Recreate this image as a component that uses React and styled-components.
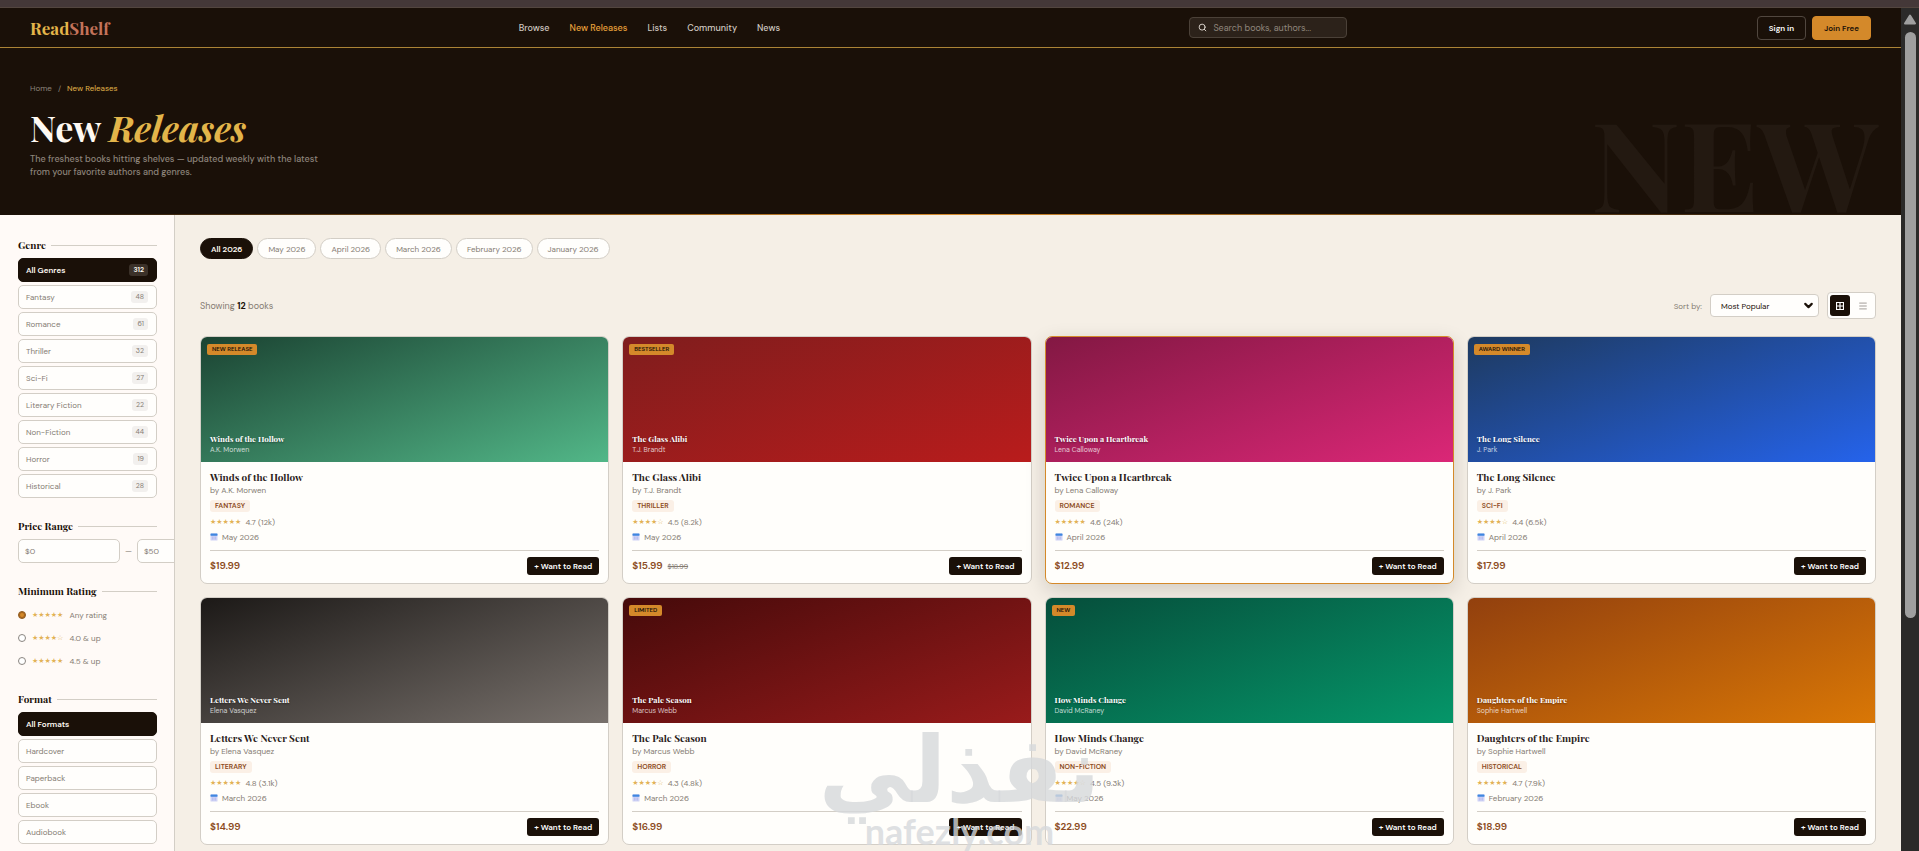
import React, { useState } from "react";
import styled, { createGlobalStyle } from "styled-components";
import { ChevronDown, Menu, Search } from "lucide-react";

const ink = "#1a1008";
const gold = "#e3b54a";
const amber = "#d4892a";
const border = "#d3cec6";
const muted = "#857c73";
const serif = `"Playfair Display", "Liberation Serif", serif`;
const sans = `"DM Sans", Inter, sans-serif`;

const GlobalStyle = createGlobalStyle`
  *, *::before, *::after { box-sizing: border-box; }
  body { margin: 0; background: #f5efe6; font-family: ${sans}; color: ${ink}; }
  button, input, select { font-family: inherit; margin: 0; }
  h1, h2, h3, p, ul { margin: 0; padding: 0; }
  ul { list-style: none; }
  a { color: inherit; text-decoration: none; }
`;

const Frame = styled.div`
  position: relative;
  display: flex;
  flex-direction: column;
  height: 100vh;
  overflow: hidden;
`;

const TopStrip = styled.div`
  flex: none;
  height: 8px;
  background: #443838;
  border-bottom: 1px solid #53463f;
`;

const Viewport = styled.div`
  flex: 1;
  display: flex;
  min-height: 0;
`;

const Page = styled.div`
  flex: 1;
  min-width: 0;
  overflow: hidden;
`;

const ScrollTrack = styled.div`
  flex: none;
  display: flex;
  flex-direction: column;
  align-items: center;
  gap: 7px;
  width: 18px;
  padding-top: 6px;
  background: #2b2a29;
`;

const ScrollThumb = styled.div`
  width: 11px;
  height: 70%;
  border-radius: 6px;
  background: #9f9f9f;
`;

/* navbar */

const Navbar = styled.header`
  display: flex;
  align-items: center;
  justify-content: space-between;
  height: 40px;
  padding: 0 30px;
  background: ${ink};
  border-bottom: 1px solid #ab8436;
`;

const Logo = styled.a`
  font: 700 17px/20px ${serif};
  color: ${gold};
  span { color: #c4735a; }
`;

const NavLinks = styled.nav`
  display: flex;
  gap: 20px;
`;

const NavLink = styled.a`
  font-size: 9px;
  font-weight: 500;
  line-height: 12px;
  color: ${({ $active }) => ($active ? "#e9a13b" : "#cfc8c0")};
`;

const SearchBox = styled.label`
  display: flex;
  align-items: center;
  gap: 6px;
  width: 158px;
  height: 21px;
  padding: 0 8px;
  border: 1px solid #4b4138;
  border-radius: 4px;
  background: #2c221a;
  color: #e6e0d8;
  input {
    flex: 1;
    min-width: 0;
    padding: 0;
    border: 0;
    outline: 0;
    background: none;
    color: #fff;
    font-size: 9px;
  }
  input::placeholder { color: #8f867c; opacity: 1; }
`;

const NavActions = styled.div`
  display: flex;
  gap: 6px;
`;

const NavButton = styled.button`
  height: 24px;
  padding: 0 11px;
  border: 1px solid ${({ $primary }) => ($primary ? amber : "#51473f")};
  border-radius: 4px;
  background: ${({ $primary }) => ($primary ? amber : "transparent")};
  color: ${({ $primary }) => ($primary ? ink : "#fff")};
  font-size: 8px;
  font-weight: 600;
  cursor: pointer;
`;

/* hero */

const Hero = styled.section`
  position: relative;
  overflow: hidden;
  padding: 34px 30px 36px;
  background: ${ink};
  &::after {
    content: "";
    display: block;
    position: absolute;
    left: 0;
    right: 0;
    bottom: 0;
    height: 1px;
    background: linear-gradient(90deg, transparent, ${amber}, transparent);
  }
`;

const GhostWord = styled.span`
  position: absolute;
  right: 23px;
  bottom: 0;
  font: 700 124px/108px ${serif};
  color: #231911;
`;

const Breadcrumb = styled.nav`
  display: flex;
  gap: 6px;
  margin-bottom: 13px;
  font-size: 8px;
  line-height: 12px;
  color: #8d847b;
  a:last-child { color: ${gold}; }
`;

const HeroTitle = styled.h1`
  font: 700 36px/40px ${serif};
  color: #fffaf3;
  em { color: ${gold}; }
`;

const HeroText = styled.p`
  max-width: 300px;
  margin-top: 6px;
  font-size: 9px;
  line-height: 13px;
  font-weight: 500;
  color: #8d847b;
`;

/* sidebar */

const Body = styled.div`
  display: flex;
  align-items: stretch;
`;

const Sidebar = styled.aside`
  flex: none;
  display: flex;
  flex-direction: column;
  gap: 21px;
  width: 175px;
  padding: 23px 17px 24px 18px;
  overflow: hidden;
  background: #fffaf7;
  border-right: 1px solid ${border};
`;

const SectionTitle = styled.h2`
  display: flex;
  align-items: center;
  gap: 5px;
  margin-bottom: 6px;
  font: 700 10px/14px ${serif};
  white-space: nowrap;
  &::after {
    content: "";
    flex: 1;
    height: 1px;
    background: ${border};
  }
`;

const FilterList = styled.ul`
  display: grid;
  gap: 3px;
`;

const FilterButton = styled.button`
  display: flex;
  align-items: center;
  justify-content: space-between;
  width: 100%;
  height: 24px;
  padding: 0 8px 0 7px;
  border: 1px solid ${({ $active }) => ($active ? ink : border)};
  border-radius: 5px;
  background: ${({ $active }) => ($active ? ink : "#fffefc")};
  color: ${({ $active }) => ($active ? "#fffaf3" : muted)};
  font-size: 8px;
  font-weight: ${({ $active }) => ($active ? 600 : 400)};
  cursor: pointer;
`;

const Count = styled.span`
  padding: 0 4px;
  border-radius: 3px;
  background: ${({ $active }) => ($active ? "#3b3129" : "#f2f0ee")};
  font-size: 7px;
  line-height: 12px;
`;

const PriceRange = styled.div`
  display: flex;
  align-items: center;
  gap: 5px;
  font-size: 8px;
  color: ${muted};
`;

const PriceInput = styled.input`
  flex: none;
  width: 102px;
  height: 24px;
  padding: 0 6px;
  border: 1px solid ${border};
  border-radius: 5px;
  background: #fffefc;
  font-size: 8px;
  &::placeholder { color: ${muted}; opacity: 1; }
`;

const RatingOptions = styled.div`
  display: grid;
  gap: 2px;
`;

const RatingOption = styled.label`
  display: flex;
  align-items: center;
  gap: 6px;
  height: 21px;
  font-size: 8px;
  color: ${muted};
  input {
    appearance: none;
    width: 8px;
    height: 8px;
    margin: 0;
    border: 1px solid #8a8580;
    border-radius: 50%;
    background: #fff;
  }
  input:checked {
    border-color: #8c5a22;
    background: ${amber};
    box-shadow: inset 0 0 0 1px #a9641d;
  }
`;

const Stars = styled.span`
  font-family: "DejaVu Sans", sans-serif;
  font-size: 7px;
  line-height: 12px;
  color: #e2b257;
`;

/* results */

const Main = styled.main`
  flex: 1;
  min-width: 0;
  padding: 23px 25px;
`;

const MonthTabs = styled.div`
  display: flex;
  gap: 4px;
`;

const MonthTab = styled.button`
  height: 21px;
  padding: 0 10px;
  border: 1px solid ${({ $active }) => ($active ? ink : border)};
  border-radius: 11px;
  background: ${({ $active }) => ($active ? ink : "#fffefc")};
  color: ${({ $active }) => ($active ? "#fffaf3" : muted)};
  font-size: 8px;
  font-weight: ${({ $active }) => ($active ? 600 : 400)};
  cursor: pointer;
`;

const Toolbar = styled.div`
  display: flex;
  align-items: center;
  justify-content: space-between;
  margin: 33px 0 17px;
  font-size: 9px;
  color: ${muted};
  strong { color: ${ink}; }
`;

const SortControls = styled.div`
  display: flex;
  align-items: center;
  gap: 8px;
  font-size: 8px;
`;

const SelectWrap = styled.span`
  position: relative;
  display: flex;
  select {
    appearance: none;
    width: 109px;
    height: 23px;
    padding: 0 10px;
    border: 1px solid ${border};
    border-radius: 4px;
    background: #fffefc;
    color: ${ink};
    font-size: 8px;
  }
  svg {
    position: absolute;
    right: 4px;
    top: 5px;
    color: ${ink};
    pointer-events: none;
  }
`;

const ViewToggle = styled.div`
  display: flex;
  gap: 3px;
  padding: 2px;
  border: 1px solid ${border};
  border-radius: 4px;
  background: #fffefc;
`;

const ViewButton = styled.button`
  display: grid;
  place-items: center;
  width: 20px;
  height: 21px;
  padding: 0;
  border: 0;
  border-radius: 3px;
  background: ${({ $active }) => ($active ? ink : "transparent")};
  color: ${({ $active }) => ($active ? "#fff" : "#8f8a84")};
  cursor: pointer;
`;

const Grid = styled.div`
  display: grid;
  grid-template-columns: repeat(4, 1fr);
  gap: 13px;
`;

const Card = styled.article`
  overflow: hidden;
  border: 1px solid ${({ $hot }) => ($hot ? amber : border)};
  border-radius: 7px;
  background: #fffefb;
  box-shadow: ${({ $hot }) => ($hot ? "0 6px 20px rgba(26, 16, 8, 0.16)" : "none")};
`;

const Cover = styled.div`
  position: relative;
  display: flex;
  flex-direction: column;
  justify-content: flex-end;
  height: 125px;
  padding: 0 9px 7px;
  background: linear-gradient(160deg, ${({ $from }) => $from}, ${({ $to }) => $to});
  color: #fff;
`;

const CoverTitle = styled.div`
  font: 700 8px/12px ${serif};
  text-shadow: 0 1px 2px rgba(0, 0, 0, 0.4);
`;

const CoverAuthor = styled.div`
  font-size: 7px;
  line-height: 10px;
  color: rgba(255, 255, 255, 0.75);
`;

const Badge = styled.span`
  position: absolute;
  left: 6px;
  top: 7px;
  padding: 0 5px;
  border-radius: 2px;
  background: ${amber};
  color: ${ink};
  font-size: 6px;
  font-weight: 600;
  line-height: 11px;
  text-transform: uppercase;
`;

const CardBody = styled.div`
  padding: 8px 9px;
  font-size: 8px;
  line-height: 12px;
  color: ${muted};
`;

const BookTitle = styled.h3`
  font: 700 10px/14px ${serif};
  color: #2a211a;
`;

const Author = styled.p`
  line-height: 13px;
`;

const Tag = styled.span`
  display: block;
  width: fit-content;
  margin: 3px 0 4px;
  padding: 0 5px;
  border-radius: 3px;
  background: #fbf0e6;
  color: #8b4a20;
  font-size: 7px;
  font-weight: 600;
  text-transform: uppercase;
`;

const Meta = styled.div`
  display: flex;
  align-items: center;
  gap: 4px;
  height: 12px;
  margin-bottom: 3px;
  font-size: 8px;
`;

const CardFooter = styled.div`
  display: flex;
  align-items: center;
  justify-content: space-between;
  margin-top: 7px;
  padding-top: 6px;
  border-top: 1px solid ${border};
`;

const Price = styled.span`
  font-size: 10px;
  font-weight: 600;
  color: #8b4a20;
  s {
    margin-left: 5px;
    font-size: 7px;
    font-weight: 400;
    color: ${muted};
  }
`;

const WantButton = styled.button`
  height: 18px;
  padding: 0 7px;
  border: 0;
  border-radius: 3px;
  background: ${ink};
  color: #fff;
  font-size: 8px;
  font-weight: 600;
  cursor: pointer;
`;

const Watermark = styled.div`
  position: absolute;
  left: 0;
  right: 0;
  bottom: 0;
  display: flex;
  flex-direction: column;
  align-items: center;
  color: rgba(214, 216, 219, 0.8);
  pointer-events: none;
`;

const WatermarkArabic = styled.span`
  font: 700 92px/80px "DejaVu Sans", sans-serif;
`;

const WatermarkLatin = styled.span`
  font: 700 36px/40px Lato, sans-serif;
`;

const genres = [
  ["All Genres", 312],
  ["Fantasy", 48],
  ["Romance", 61],
  ["Thriller", 32],
  ["Sci-Fi", 27],
  ["Literary Fiction", 22],
  ["Non-Fiction", 44],
  ["Horror", 19],
  ["Historical", 28],
];

const formats = ["All Formats", "Hardcover", "Paperback", "Ebook", "Audiobook"];

const months = ["All 2026", "May 2026", "April 2026", "March 2026", "February 2026", "January 2026"];

const ratings = [
  ["★★★★★", "Any rating"],
  ["★★★★☆", "4.0 & up"],
  ["★★★★★", "4.5 & up"],
];

const books = [
  { title: "Winds of the Hollow", author: "A.K. Morwen", badge: "New Release", tag: "Fantasy", stars: "★★★★★", rating: "4.7 (12k)", date: "May 2026", price: "$19.99", from: "#1b4332", to: "#52b788" },
  { title: "The Glass Alibi", author: "T.J. Brandt", badge: "Bestseller", tag: "Thriller", stars: "★★★★☆", rating: "4.5 (8.2k)", date: "May 2026", price: "$15.99", old: "$18.99", from: "#7f1d1d", to: "#b91c1c" },
  { title: "Twice Upon a Heartbreak", author: "Lena Calloway", tag: "Romance", stars: "★★★★★", rating: "4.6 (24k)", date: "April 2026", price: "$12.99", from: "#831843", to: "#db2777", hot: true },
  { title: "The Long Silence", author: "J. Park", badge: "Award Winner", tag: "Sci-Fi", stars: "★★★★☆", rating: "4.4 (6.5k)", date: "April 2026", price: "$17.99", from: "#1e3a5f", to: "#2563eb" },
  { title: "Letters We Never Sent", author: "Elena Vasquez", tag: "Literary", stars: "★★★★★", rating: "4.8 (3.1k)", date: "March 2026", price: "$14.99", from: "#1c1917", to: "#78716c" },
  { title: "The Pale Season", author: "Marcus Webb", badge: "Limited", tag: "Horror", stars: "★★★★☆", rating: "4.3 (4.8k)", date: "March 2026", price: "$16.99", from: "#450a0a", to: "#991b1b" },
  { title: "How Minds Change", author: "David McRaney", badge: "New", tag: "Non-Fiction", stars: "★★★★☆", rating: "4.5 (9.3k)", date: "May 2026", price: "$22.99", from: "#064e3b", to: "#059669" },
  { title: "Daughters of the Empire", author: "Sophie Hartwell", tag: "Historical", stars: "★★★★★", rating: "4.7 (7.9k)", date: "February 2026", price: "$18.99", from: "#92400e", to: "#d97706" },
];

function CalendarIcon() {
  return (
    <svg width="8" height="8" viewBox="0 0 8 8" aria-hidden="true">
      <rect x="0.5" y="0.5" width="7" height="7" rx="0.6" fill="#cfd2f5" />
      <rect x="0.5" y="0.5" width="7" height="2.2" rx="0.4" fill="#3f86e0" />
      <path d="M2 4.2h4M2 5.8h4" stroke="#a9b2ea" strokeWidth="0.8" strokeDasharray="1 0.5" />
    </svg>
  );
}

function GridIcon() {
  return (
    <svg width="8" height="8" viewBox="0 0 8 8" aria-hidden="true">
      <path d="M0.5 0.5h7v7h-7zM4 0.5v7M0.5 4h7" fill="none" stroke="currentColor" strokeWidth="1.2" />
    </svg>
  );
}

function BookCard({ book }) {
  return (
    <Card $hot={book.hot}>
      <Cover $from={book.from} $to={book.to}>
        {book.badge && <Badge>{book.badge}</Badge>}
        <CoverTitle>{book.title}</CoverTitle>
        <CoverAuthor>{book.author}</CoverAuthor>
      </Cover>
      <CardBody>
        <BookTitle>{book.title}</BookTitle>
        <Author>by {book.author}</Author>
        <Tag>{book.tag}</Tag>
        <Meta>
          <Stars>{book.stars}</Stars>
          {book.rating}
        </Meta>
        <Meta>
          <CalendarIcon />
          {book.date}
        </Meta>
        <CardFooter>
          <Price>
            {book.price}
            {book.old && <s>{book.old}</s>}
          </Price>
          <WantButton type="button">+ Want to Read</WantButton>
        </CardFooter>
      </CardBody>
    </Card>
  );
}

function App() {
  const [genre, setGenre] = useState("All Genres");
  const [format, setFormat] = useState("All Formats");
  const [month, setMonth] = useState("All 2026");
  const [view, setView] = useState("grid");

  return (
    <Frame>
      <GlobalStyle />
      <TopStrip />
      <Viewport>
        <Page>
          <Navbar>
            <Logo href="#">Read<span>Shelf</span></Logo>
            <NavLinks>
              {["Browse", "New Releases", "Lists", "Community", "News"].map(link => (
                <NavLink key={link} href="#" $active={link === "New Releases"}>{link}</NavLink>
              ))}
            </NavLinks>
            <SearchBox>
              <Search size={9} strokeWidth={2.4} />
              <input type="text" aria-label="Search" placeholder="Search books, authors..." />
            </SearchBox>
            <NavActions>
              <NavButton type="button">Sign in</NavButton>
              <NavButton type="button" $primary>Join Free</NavButton>
            </NavActions>
          </Navbar>

          <Hero>
            <GhostWord aria-hidden="true">NEW</GhostWord>
            <Breadcrumb>
              <a href="#">Home</a>
              <span>/</span>
              <a href="#">New Releases</a>
            </Breadcrumb>
            <HeroTitle>New <em>Releases</em></HeroTitle>
            <HeroText>
              The freshest books hitting shelves — updated weekly with the latest from your favorite authors and genres.
            </HeroText>
          </Hero>

          <Body>
            <Sidebar>
              <section>
                <SectionTitle>Genre</SectionTitle>
                <FilterList>
                  {genres.map(([name, count]) => (
                    <li key={name}>
                      <FilterButton type="button" $active={genre === name} onClick={() => setGenre(name)}>
                        {name}
                        <Count $active={genre === name}>{count}</Count>
                      </FilterButton>
                    </li>
                  ))}
                </FilterList>
              </section>
              <section>
                <SectionTitle>Price Range</SectionTitle>
                <PriceRange>
                  <PriceInput type="text" aria-label="Minimum price" placeholder="$0" />
                  <span>—</span>
                  <PriceInput type="text" aria-label="Maximum price" placeholder="$50" />
                </PriceRange>
              </section>
              <section>
                <SectionTitle>Minimum Rating</SectionTitle>
                <RatingOptions>
                  {ratings.map(([stars, label], i) => (
                    <RatingOption key={label}>
                      <input type="radio" name="rating" defaultChecked={i === 0} />
                      <Stars>{stars}</Stars>
                      {label}
                    </RatingOption>
                  ))}
                </RatingOptions>
              </section>
              <section>
                <SectionTitle>Format</SectionTitle>
                <FilterList>
                  {formats.map(name => (
                    <li key={name}>
                      <FilterButton type="button" $active={format === name} onClick={() => setFormat(name)}>
                        {name}
                      </FilterButton>
                    </li>
                  ))}
                </FilterList>
              </section>
            </Sidebar>

            <Main>
              <MonthTabs>
                {months.map(name => (
                  <MonthTab key={name} type="button" $active={month === name} onClick={() => setMonth(name)}>
                    {name}
                  </MonthTab>
                ))}
              </MonthTabs>
              <Toolbar>
                <span>Showing <strong>12</strong> books</span>
                <SortControls>
                  <label htmlFor="sort">Sort by:</label>
                  <SelectWrap>
                    <select id="sort" defaultValue="Most Popular">
                      <option>Most Popular</option>
                      <option>Newest First</option>
                    </select>
                    <ChevronDown size={13} strokeWidth={4} />
                  </SelectWrap>
                  <ViewToggle>
                    <ViewButton type="button" aria-label="Grid view" $active={view === "grid"} onClick={() => setView("grid")}>
                      <GridIcon />
                    </ViewButton>
                    <ViewButton type="button" aria-label="List view" $active={view === "list"} onClick={() => setView("list")}>
                      <Menu size={10} />
                    </ViewButton>
                  </ViewToggle>
                </SortControls>
              </Toolbar>
              <Grid>
                {books.map(book => (
                  <BookCard key={book.title} book={book} />
                ))}
              </Grid>
            </Main>
          </Body>
        </Page>
        <ScrollTrack>
          <svg width="12" height="11" viewBox="0 0 12 11" aria-hidden="true">
            <path d="M6 1.5 11 9.5H1z" fill="#9f9f9f" stroke="#9f9f9f" strokeWidth="2" strokeLinejoin="round" />
          </svg>
          <ScrollThumb />
        </ScrollTrack>
      </Viewport>
      <Watermark aria-hidden="true">
        <WatermarkArabic lang="ar" dir="rtl">نفذلي</WatermarkArabic>
        <WatermarkLatin>nafezly.com</WatermarkLatin>
      </Watermark>
    </Frame>
  );
}

export default App;
